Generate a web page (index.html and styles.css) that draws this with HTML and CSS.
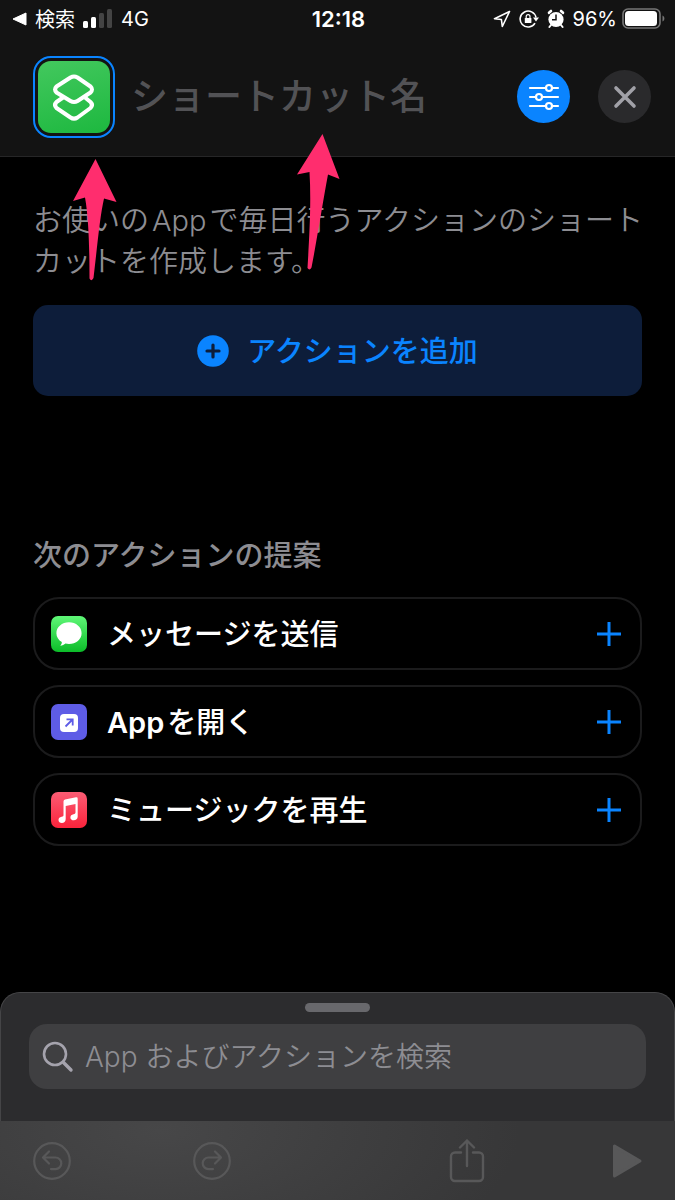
FILE: index.html
```html
<!DOCTYPE html>
<html lang="ja">
<head>
  <meta charset="UTF-8" />
  <meta name="viewport" content="width=device-width, initial-scale=1.0" />
  <title>ショートカット</title>
  <link rel="stylesheet" href="styles.css">
</head>
<body>
  <header class="top">
    <div class="status">
      <div class="status-left">
        <a class="back" href="#">
          <svg width="15" height="14" viewBox="0 0 15 14"><path d="M14 1v12L1 7z" fill="#fff" stroke="#fff" stroke-linejoin="round"/></svg>
          検索
        </a>
        <svg width="30" height="20" viewBox="0 0 30 20">
          <rect x="0" y="12" width="5" height="7" rx="1.500" fill="#fff"/>
          <rect x="8" y="8" width="5" height="11" rx="1.500" fill="#fff"/>
          <rect x="16" y="4" width="5" height="15" rx="1.500" fill="#444"/>
          <rect x="24" y="0" width="5" height="19" rx="1.500" fill="#444"/>
        </svg>
        <span>4G</span>
      </div>
      <time class="clock">12:18</time>
      <div class="status-right">
        <svg width="18" height="18" viewBox="0 0 18 18"><path d="M16.500 1.500L1.500 8.700l6.900.8.900 7z" fill="none" stroke="#fff" stroke-width="1.600" stroke-linejoin="round"/></svg>
        <svg width="20" height="20" viewBox="0 0 20 20">
          <path d="M16 14.200A8 8 0 1 1 17 8.500" fill="none" stroke="#fff" stroke-width="1.600"/>
          <path d="M14 8.500h6l-3 4z" fill="#fff"/>
          <rect x="5.800" y="9" width="6.600" height="5" rx=".6" fill="#fff"/>
          <path d="M7.200 9V7.600a1.900 1.900 0 0 1 3.800 0V9" fill="none" stroke="#fff" stroke-width="1.200"/>
        </svg>
        <svg width="18" height="20" viewBox="0 0 18 20">
          <circle cx="9" cy="10.500" r="7.600" fill="#fff"/>
          <path d="M2 3.800l2-1.800M16 3.800l-2-1.800" stroke="#fff" stroke-width="2.600" stroke-linecap="round"/>
          <path d="M4 16l-1.600 2M14 16l1.600 2" stroke="#fff" stroke-width="2" stroke-linecap="round"/>
          <path d="M9 5.500v5.200H5" fill="none" stroke="#131313" stroke-width="1.500"/>
        </svg>
        <span>96%</span>
        <svg class="battery" width="43" height="21" viewBox="0 0 43 21">
          <rect x="1" y="1" width="37" height="19" rx="5" fill="none" stroke="#777" stroke-width="1.600"/>
          <rect x="3" y="3" width="32" height="15" rx="3.500" fill="#fff"/>
          <path d="M40.500 7.500c2.500 1 2.500 5 0 6z" fill="#777"/>
        </svg>
      </div>
    </div>

    <div class="titlebar">
      <button class="app-icon" aria-label="アイコン">
        <svg width="72" height="72" viewBox="0 0 72 72" fill="none" stroke="#fff" stroke-width="4" stroke-linejoin="round">
          <path d="M25 36.500L18.500 41Q15.500 44 18.500 47L32.500 56.500Q36 58.800 39.500 56.500L52.500 47Q55.500 44 52.500 41L47 36.500"/>
          <path d="M32.500 16.500Q36 14.500 39.500 16.500L52.500 25.500Q55.500 28.500 52.500 31.500L39.500 40Q36 42.200 32.500 40L18.500 31.500Q15.500 28.500 18.500 25.500Z"/>
        </svg>
      </button>
      <input class="name" type="text" placeholder="ショートカット名" aria-label="ショートカット名">
      <button class="round settings" aria-label="設定">
        <svg width="32" height="28" viewBox="0 0 32 28" fill="#0a84ff" stroke="#fff" stroke-width="2.200" stroke-linecap="round">
          <path d="M2 5h28M2 14h28M2 23h28"/>
          <circle cx="21" cy="5" r="3"/>
          <circle cx="11" cy="14" r="3"/>
          <circle cx="21" cy="23" r="3"/>
        </svg>
      </button>
      <button class="round close" aria-label="閉じる">
        <svg width="24" height="24" viewBox="0 0 24 24"><path d="M3 3l18 18M21 3L3 21" stroke="#a1a1a8" stroke-width="3.600" stroke-linecap="round"/></svg>
      </button>
    </div>

    <svg class="arrow arrow-icon" width="44" height="122" viewBox="0 0 44 122"><path d="M22.500 0L43.500 43L31 39.500C27 57 24.500 85 20.500 119Q18.500 123 16.500 119.500C16.500 95 16 60 12 38.500L0 42Z" fill="#ff2d6e"/></svg>
    <svg class="arrow arrow-name" width="44" height="136" viewBox="0 0 44 136"><path d="M25.500 0L42.500 45L31 40.500C26 67 21 100 14.500 133.500Q12.500 137 10.500 134C12 108 14.500 70 12.500 38L0 40.500Z" fill="#ff2d6e"/></svg>
  </header>

  <main>
    <p class="intro">お使いの<span class="latin">App</span>で毎日行うアクションのショートカットを作成します。</p>
    <button class="add-action">
      <svg width="32" height="32" viewBox="0 0 32 32"><circle cx="16" cy="16" r="15.800" fill="#0a84ff"/><path d="M16 10v12M10 16h12" stroke="#0d1d3a" stroke-width="3.200" stroke-linecap="round"/></svg>
      <span>アクションを追加</span>
    </button>

    <h2>次のアクションの提案</h2>
    <ul class="suggestions">
      <li>
        <button class="suggestion">
          <svg class="tile messages" width="36" height="36" viewBox="0 0 36 36"><path d="M18 6.300c7 0 12.600 4.800 12.600 10.900S25 28 18 28c-1.200 0-2.500-.2-3.600-.5-1.200 1.200-3.200 2.200-5.100 2.200 1-.9 1.600-2.200 1.500-3.600-3.300-2-5.400-5.200-5.400-8.900C5.400 11.100 11 6.300 18 6.300z" fill="#fff"/></svg>
          <span class="label">メッセージを送信</span>
          <svg class="plus" width="26" height="26" viewBox="0 0 26 26"><path d="M13 1v24M1 13h24" stroke="#0a84ff" stroke-width="3"/></svg>
        </button>
      </li>
      <li>
        <button class="suggestion">
          <svg class="tile open-app" width="36" height="36" viewBox="0 0 36 36"><rect x="9" y="10" width="18" height="18" rx="4" fill="#fff"/><path d="M14.500 22.500l7-7M15.500 15.300h6.200v6.200" fill="none" stroke="#5e5ce6" stroke-width="1.800"/></svg>
          <span class="label"><span class="latin">App</span>を開く</span>
          <svg class="plus" width="26" height="26" viewBox="0 0 26 26"><path d="M13 1v24M1 13h24" stroke="#0a84ff" stroke-width="3"/></svg>
        </button>
      </li>
      <li>
        <button class="suggestion">
          <svg class="tile music" width="36" height="36" viewBox="0 0 36 36"><path d="M12.500 9.500Q12.500 8 14 7.600L25 5.300Q26.700 5 26.700 6.700V24.500C26.700 27 24.900 28.300 22.800 28.300C20.800 28.300 19.400 27.100 19.400 25.400C19.400 23.600 20.600 22.600 22.500 22.200C24 21.900 24.500 21.500 24.500 20.300V12L14.700 14V27C14.700 29.500 13 31 10.900 31C8.900 31 7.500 29.800 7.500 28C7.500 26.300 8.700 25.200 10.600 24.800C12.100 24.500 12.500 24.100 12.500 23Z" fill="#fff"/></svg>
          <span class="label">ミュージックを再生</span>
          <svg class="plus" width="26" height="26" viewBox="0 0 26 26"><path d="M13 1v24M1 13h24" stroke="#0a84ff" stroke-width="3"/></svg>
        </button>
      </li>
    </ul>
  </main>

  <section class="sheet">
    <div class="grabber"></div>
    <label class="search">
      <svg width="32" height="32" viewBox="0 0 32 32" fill="none" stroke="#a5a3ad" stroke-linecap="round"><circle cx="13" cy="13" r="11" stroke-width="2.600"/><path d="M21.500 21.500l7.500 7.500" stroke-width="3.400"/></svg>
      <input type="search" placeholder="App およびアクションを検索" aria-label="Appおよびアクションを検索">
    </label>
  </section>

  <footer class="toolbar">
    <div class="tools">
      <button aria-label="取り消す">
        <svg width="38" height="38" viewBox="0 0 38 38" fill="none" stroke="#585859" stroke-width="2.200" stroke-linecap="round" stroke-linejoin="round"><circle cx="19" cy="19" r="17.800"/><path d="M16 9.500L10 15.500l6 6M10.500 15.500H22.500a5.800 5.800 0 0 1 0 11.600H18"/></svg>
      </button>
      <button aria-label="やり直す">
        <svg width="38" height="38" viewBox="0 0 38 38" fill="none" stroke="#585859" stroke-width="2.200" stroke-linecap="round" stroke-linejoin="round"><circle cx="19" cy="19" r="17.800"/><path d="M22 9.500l6 6-6 6M27.500 15.500H15.500a5.800 5.800 0 0 0 0 11.600H20"/></svg>
      </button>
    </div>
    <div class="tools">
      <button aria-label="共有">
        <svg width="38" height="44" viewBox="0 0 38 44" fill="none" stroke="#585859" stroke-width="2.400" stroke-linecap="round" stroke-linejoin="round"><path d="M13 13.500H7a4 4 0 0 0-4 4V38a4 4 0 0 0 4 4H31a4 4 0 0 0 4-4V17.500a4 4 0 0 0-4-4H25M19 27V1.500M12 8.500l7-7 7 7"/></svg>
      </button>
      <button aria-label="実行">
        <svg width="38" height="38" viewBox="0 0 38 38"><path d="M6.500 4v30L32 19z" fill="#585859" stroke="#585859" stroke-width="3" stroke-linejoin="round"/></svg>
      </button>
    </div>
  </footer>
</body>
</html>
```
FILE: styles.css
```css
:root {
  --blue: #0a84ff;
  --bar: #131313;
  --gray: #8d8d92;
  --line: #1b1b1c;
}

* {
  box-sizing: border-box;
  margin: 0;
  padding: 0;
}

body {
  display: flex;
  flex-direction: column;
  min-height: 100vh;
  background: #000;
  color: #fff;
  font-family: Inter, "Noto Sans CJK JP", sans-serif;
  font-size: 29px;
}

button,
input {
  border: none;
  background: none;
  color: inherit;
  font: inherit;
}

button {
  cursor: pointer;
}

svg {
  display: block;
  flex-shrink: 0;
}

.top {
  position: relative;
  background: var(--bar);
  border-bottom: 1px solid #262627;
}

.status {
  display: grid;
  grid-template-columns: 1fr auto 1fr;
  align-items: center;
  height: 37px;
  padding: 0 10px 0 12px;
  font-size: 20px;
}

.status-left,
.status-right,
.back {
  display: flex;
  align-items: center;
  gap: 8px;
}

.status-right {
  justify-content: flex-end;
}

.back {
  color: #fff;
  text-decoration: none;
}

.clock {
  font-size: 22px;
  font-weight: 600;
}

.battery {
  margin-left: -3px;
}

.titlebar {
  display: flex;
  align-items: center;
  height: 119px;
  padding: 0 24px 0 33px;
}

.app-icon {
  padding: 3px;
  border: 2px solid var(--blue);
  border-radius: 18px;
}

.app-icon svg {
  border-radius: 13px;
  background: linear-gradient(165deg, #43c85e, #1db83f);
}

.name {
  flex: 1;
  min-width: 0;
  margin: 0 16px;
  font-size: 37px;
  font-weight: 500;
}

.name::placeholder {
  color: #525255;
  opacity: 1;
}

.round {
  display: flex;
  align-items: center;
  justify-content: center;
  width: 53px;
  height: 53px;
  border-radius: 50%;
}

.settings {
  background: var(--blue);
}

.close {
  margin-left: 28px;
  background: #2a2a2c;
}

/* pointers lie over the header and the text under it */
.arrow {
  position: absolute;
  z-index: 1;
}

.arrow-icon {
  left: 73px;
  top: 159px;
}

.arrow-name {
  left: 297px;
  top: 134px;
}

main {
  flex: 1;
  padding: 43px 33px 32px;
}

.intro {
  margin-right: -16px;
  color: var(--gray);
  font-weight: 350;
  line-height: 41px;
}

.latin {
  margin: 0 3px;
}

.label .latin {
  margin-left: 0;
  font-weight: 600;
}

.add-action {
  display: flex;
  align-items: center;
  justify-content: center;
  gap: 18px;
  width: 100%;
  height: 91px;
  margin-top: 23px;
  border-radius: 15px;
  background: #0d1d3a;
  color: var(--blue);
  font-weight: 500;
}

.add-action span,
.label {
  padding-bottom: 3px;
}

h2 {
  margin: 140px 0 21px;
  color: var(--gray);
  font-size: 29px;
  font-weight: 500;
  line-height: 40px;
}

.suggestions {
  display: flex;
  flex-direction: column;
  gap: 15px;
  list-style: none;
}

.suggestion {
  display: flex;
  align-items: center;
  gap: 20px;
  width: 100%;
  height: 73px;
  padding: 0 18px 0 16px;
  border: 2px solid var(--line);
  border-radius: 26px;
  font-weight: 500;
}

.label {
  flex: 1;
  text-align: left;
}

.tile {
  border-radius: 7px;
}

.messages {
  background: linear-gradient(#5ff777, #0cbc29);
}

.open-app {
  background: #5e5ce6;
}

.music {
  background: linear-gradient(#fb5c74, #fa233b);
}

.sheet {
  padding: 10px 28px 32px;
  border: 1px solid #454547;
  border-bottom: none;
  border-radius: 20px 20px 0 0;
  background: #2c2c2e;
}

.grabber {
  width: 65px;
  height: 9px;
  margin: 0 auto 12px;
  border-radius: 5px;
  background: #68686c;
}

.search {
  display: flex;
  align-items: center;
  gap: 11px;
  height: 65px;
  padding: 0 13px;
  border-radius: 18px;
  background: #3f3f41;
}

.search input {
  flex: 1;
  min-width: 0;
  font-size: 28px;
  font-weight: 350;
}

.search input::placeholder {
  color: var(--gray);
  opacity: 1;
}

.toolbar {
  display: flex;
  align-items: center;
  justify-content: space-between;
  height: 79px;
  padding: 0 29px 0 33px;
  background: radial-gradient(ellipse 360px 160px at 160px 10px, #474748, transparent), #373738;
}

.tools {
  display: flex;
  align-items: center;
  gap: 122px;
}
```
